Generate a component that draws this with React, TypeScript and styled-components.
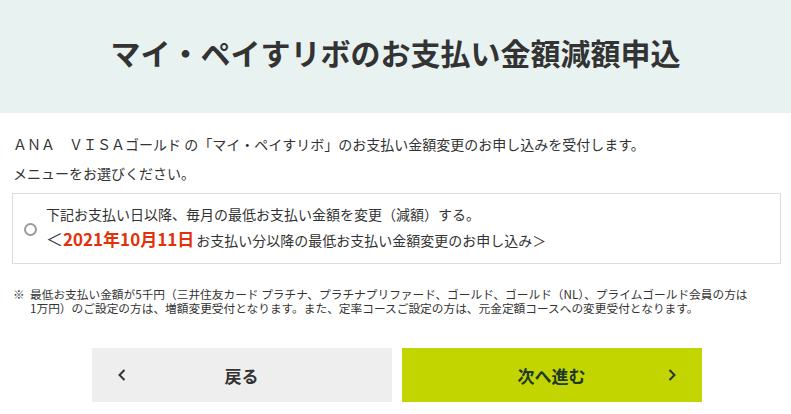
import React from "react";
import styled, { createGlobalStyle } from "styled-components";

const Global = createGlobalStyle`
  html, body { margin: 0; padding: 0; background: #fff; }
  body { font-family: "Noto Sans CJK JP", "Noto Sans", sans-serif; color: #333; }
  * { box-sizing: border-box; }
`;

const Header = styled.header`
  height: 113px;
  background: #e8f2f1;
  display: flex;
  align-items: center;
  justify-content: center;
`;

const Title = styled.h1`
  margin: 0;
  font-size: 30px;
  font-weight: 700;
  color: #333;
  letter-spacing: 0;
  padding-bottom: 9px;
`;

const Content = styled.main`
  padding: 20px 10px 0 12px;
`;

const Lead = styled.p`
  margin: 0 0 7px;
  font-size: 14px;
  line-height: 22px;
  padding-left: 1px;
`;

const OptionBox = styled.label`
  display: flex;
  align-items: center;
  gap: 9px;
  margin-top: 9px;
  border: 1px solid #dcdcdc;
  padding: 9px 11px 9px 11px;
  cursor: pointer;
`;

const Radio = styled.span`
  flex: none;
  width: 13px;
  height: 13px;
  border-radius: 50%;
  border: 2px solid #9a9a9a;
  margin-top: 2px;
`;

const OptionText = styled.div`
  display: flex;
  flex-direction: column;
`;

const OptionLine = styled.div`
  font-size: 14px;
  line-height: 22px;
`;

const OptionSub = styled.div`
  font-size: 14px;
  line-height: 28px;
`;

const Bracket = styled.span`
  font-size: 17px;
  color: #3a3f55;
`;

const DateText = styled.span`
  font-size: 17px;
  font-weight: 700;
  color: #e2320c;
  margin-right: 2px;
`;

const Note = styled.div`
  display: flex;
  gap: 5px;
  margin-top: 23px;
  font-size: 11.7px;
  line-height: 14px;
  padding-left: 1px;
  padding-right: 0;
`;

const NoteMark = styled.span`
  flex: none;
  width: 12px;
`;

const NoBreak = styled.span`
  white-space: nowrap;
`;

const Buttons = styled.div`
  display: flex;
  justify-content: center;
  gap: 10px;
  margin-top: 33px;
  padding-left: 2px;
`;

const Button = styled.button<{ $primary?: boolean }>`
  position: relative;
  width: 300px;
  height: 54px;
  border: none;
  border-radius: 0;
  background: ${(p) => (p.$primary ? "#c3d500" : "#eeeeee")};
  color: ${(p) => (p.$primary ? "#1f3a2a" : "#333")};
  font-family: "Noto Sans CJK JP", sans-serif;
  font-size: 17px;
  font-weight: 700;
  display: flex;
  align-items: center;
  justify-content: center;
  cursor: pointer;
`;

const Chevron = styled.svg<{ $side: "left" | "right" }>`
  position: absolute;
  top: 50%;
  margin-top: -6px;
  ${(p) => (p.$side === "left" ? "left: 26px;" : "right: 26px;")}
`;

export default function App() {
  return (
    <>
      <Global />
      <Header>
        <Title>マイ・ペイすリボのお支払い金額減額申込</Title>
      </Header>
      <Content>
        <Lead>ＡＮＡ　ＶＩＳＡゴールド の「マイ・ペイすリボ」のお支払い金額変更のお申し込みを受付します。</Lead>
        <Lead>メニューをお選びください。</Lead>
        <OptionBox>
          <Radio />
          <OptionText>
            <OptionLine>下記お支払い日以降、毎月の最低お支払い金額を変更（減額）する。</OptionLine>
            <OptionSub>
              <Bracket>＜</Bracket>
              <DateText>2021年10月11日</DateText>
              お支払い分以降の最低お支払い金額変更のお申し込み＞
            </OptionSub>
          </OptionText>
        </OptionBox>
        <Note>
          <NoteMark>※</NoteMark>
          <span>
            最低お支払い金額が5千円（三井住友カード プラチナ、プラチナプリファード、ゴールド、ゴールド（NL）、プライムゴールド会員の方は<NoBreak>1万円）</NoBreak>のご設定の方は、増額変更受付となります。また、定率コースご設定の方は、元金定額コースへの変更受付となります。
          </span>
        </Note>
      </Content>
      <Buttons>
        <Button type="button">
          <Chevron $side="left" width="8" height="12" viewBox="0 0 8 12">
            <polyline points="6.5,1 1.5,6 6.5,11" fill="none" stroke="#333" strokeWidth="2" />
          </Chevron>
          戻る
        </Button>
        <Button type="button" $primary>
          次へ進む
          <Chevron $side="right" width="8" height="12" viewBox="0 0 8 12">
            <polyline points="1.5,1 6.5,6 1.5,11" fill="none" stroke="#1f3a2a" strokeWidth="2" />
          </Chevron>
        </Button>
      </Buttons>
    </>
  );
}
